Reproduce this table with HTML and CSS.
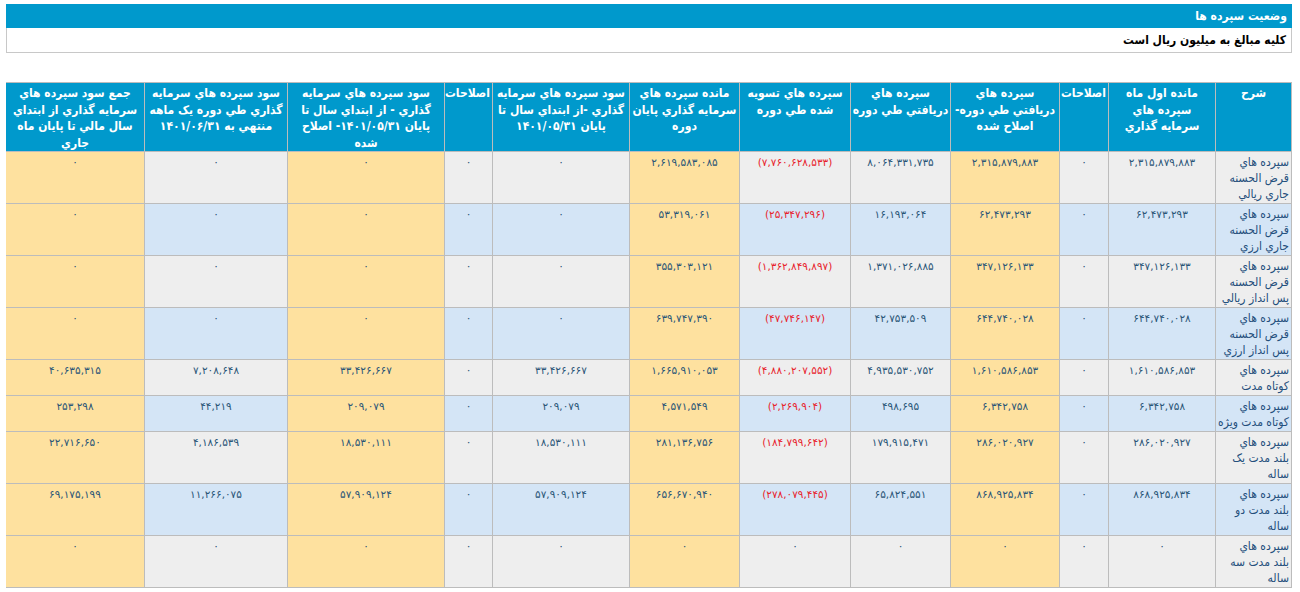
FILE: index.html
```html
<!DOCTYPE html>
<html lang="fa" dir="rtl">
<head>
<meta charset="utf-8">
<title>وضعيت سپرده ها</title>
<link rel="stylesheet" href="styles.css">
</head>
<body>
<div class="panel">
  <div class="panel-title">وضعيت سپرده ها</div>
  <div class="panel-note">کليه مبالغ به ميليون ريال است</div>
</div>
<table class="grid">
  <colgroup>
    <col class="c1"><col class="c2"><col class="c3"><col class="c4"><col class="c5"><col class="c6">
    <col class="c7"><col class="c8"><col class="c9"><col class="c10"><col class="c11"><col class="c12">
  </colgroup>
  <thead>
    <tr>
      <th>شرح</th>
      <th class="loose">مانده اول ماه سپرده هاي سرمايه گذاري</th>
      <th>اصلاحات</th>
      <th>سپرده هاي دريافتي طي دوره- اصلاح شده</th>
      <th class="tight">سپرده هاي دريافتي طي دوره</th>
      <th>سپرده هاي تسويه شده طي دوره</th>
      <th>مانده سپرده هاي سرمايه گذاري پايان دوره</th>
      <th>سود سپرده هاي سرمايه گذاري -از ابتداي سال تا پايان ۱۴۰۱/۰۵/۳۱</th>
      <th>اصلاحات</th>
      <th>سود سپرده هاي سرمايه گذاري - از ابتداي سال تا پايان ۱۴۰۱/۰۵/۳۱- اصلاح شده</th>
      <th>سود سپرده هاي سرمايه گذاري طي دوره يک ماهه منتهي به ۱۴۰۱/۰۶/۳۱</th>
      <th>جمع سود سپرده هاي سرمايه گذاري از ابتداي سال مالي تا پايان ماه جاري</th>
    </tr>
  </thead>
  <tbody>
    <tr class="odd">
      <td class="desc"><span class="lead">سپرده هاي</span> قرض الحسنه جاري ريالي</td>
      <td>۲,۳۱۵,۸۷۹,۸۸۳</td><td>۰</td><td class="hl">۲,۳۱۵,۸۷۹,۸۸۳</td><td>۸,۰۶۴,۳۳۱,۷۳۵</td>
      <td class="neg">(۷,۷۶۰,۶۲۸,۵۳۳)</td><td class="hl">۲,۶۱۹,۵۸۳,۰۸۵</td><td>۰</td><td>۰</td>
      <td class="hl">۰</td><td>۰</td><td class="hl">۰</td>
    </tr>
    <tr class="even">
      <td class="desc"><span class="lead">سپرده هاي</span> قرض الحسنه جاري ارزي</td>
      <td>۶۲,۴۷۳,۲۹۳</td><td>۰</td><td class="hl">۶۲,۴۷۳,۲۹۳</td><td>۱۶,۱۹۳,۰۶۴</td>
      <td class="neg">(۲۵,۳۴۷,۲۹۶)</td><td class="hl">۵۳,۳۱۹,۰۶۱</td><td>۰</td><td>۰</td>
      <td class="hl">۰</td><td>۰</td><td class="hl">۰</td>
    </tr>
    <tr class="odd">
      <td class="desc"><span class="lead">سپرده هاي</span> قرض الحسنه پس انداز ريالي</td>
      <td>۳۴۷,۱۲۶,۱۳۳</td><td>۰</td><td class="hl">۳۴۷,۱۲۶,۱۳۳</td><td>۱,۳۷۱,۰۲۶,۸۸۵</td>
      <td class="neg">(۱,۳۶۲,۸۴۹,۸۹۷)</td><td class="hl">۳۵۵,۳۰۳,۱۲۱</td><td>۰</td><td>۰</td>
      <td class="hl">۰</td><td>۰</td><td class="hl">۰</td>
    </tr>
    <tr class="even">
      <td class="desc"><span class="lead">سپرده هاي</span> قرض الحسنه پس انداز ارزي</td>
      <td>۶۴۴,۷۴۰,۰۲۸</td><td>۰</td><td class="hl">۶۴۴,۷۴۰,۰۲۸</td><td>۴۲,۷۵۳,۵۰۹</td>
      <td class="neg">(۴۷,۷۴۶,۱۴۷)</td><td class="hl">۶۳۹,۷۴۷,۳۹۰</td><td>۰</td><td>۰</td>
      <td class="hl">۰</td><td>۰</td><td class="hl">۰</td>
    </tr>
    <tr class="odd">
      <td class="desc"><span class="lead">سپرده هاي</span> کوتاه مدت</td>
      <td>۱,۶۱۰,۵۸۶,۸۵۳</td><td>۰</td><td class="hl">۱,۶۱۰,۵۸۶,۸۵۳</td><td>۴,۹۳۵,۵۳۰,۷۵۲</td>
      <td class="neg">(۴,۸۸۰,۲۰۷,۵۵۲)</td><td class="hl">۱,۶۶۵,۹۱۰,۰۵۳</td><td>۳۳,۴۲۶,۶۶۷</td><td>۰</td>
      <td class="hl">۳۳,۴۲۶,۶۶۷</td><td>۷,۲۰۸,۶۴۸</td><td class="hl">۴۰,۶۳۵,۳۱۵</td>
    </tr>
    <tr class="even">
      <td class="desc"><span class="lead">سپرده هاي</span> کوتاه مدت ويژه</td>
      <td>۶,۳۴۲,۷۵۸</td><td>۰</td><td class="hl">۶,۳۴۲,۷۵۸</td><td>۴۹۸,۶۹۵</td>
      <td class="neg">(۲,۲۶۹,۹۰۴)</td><td class="hl">۴,۵۷۱,۵۴۹</td><td>۲۰۹,۰۷۹</td><td>۰</td>
      <td class="hl">۲۰۹,۰۷۹</td><td>۴۴,۲۱۹</td><td class="hl">۲۵۳,۲۹۸</td>
    </tr>
    <tr class="odd">
      <td class="desc"><span class="lead">سپرده هاي</span> بلند مدت يک ساله</td>
      <td>۲۸۶,۰۲۰,۹۲۷</td><td>۰</td><td class="hl">۲۸۶,۰۲۰,۹۲۷</td><td>۱۷۹,۹۱۵,۴۷۱</td>
      <td class="neg">(۱۸۴,۷۹۹,۶۴۲)</td><td class="hl">۲۸۱,۱۳۶,۷۵۶</td><td>۱۸,۵۳۰,۱۱۱</td><td>۰</td>
      <td class="hl">۱۸,۵۳۰,۱۱۱</td><td>۴,۱۸۶,۵۳۹</td><td class="hl">۲۲,۷۱۶,۶۵۰</td>
    </tr>
    <tr class="even">
      <td class="desc"><span class="lead">سپرده هاي</span> بلند مدت دو ساله</td>
      <td>۸۶۸,۹۲۵,۸۳۴</td><td>۰</td><td class="hl">۸۶۸,۹۲۵,۸۳۴</td><td>۶۵,۸۲۴,۵۵۱</td>
      <td class="neg">(۲۷۸,۰۷۹,۴۴۵)</td><td class="hl">۶۵۶,۶۷۰,۹۴۰</td><td>۵۷,۹۰۹,۱۲۴</td><td>۰</td>
      <td class="hl">۵۷,۹۰۹,۱۲۴</td><td>۱۱,۲۶۶,۰۷۵</td><td class="hl">۶۹,۱۷۵,۱۹۹</td>
    </tr>
    <tr class="odd">
      <td class="desc"><span class="lead">سپرده هاي</span> بلند مدت سه ساله</td>
      <td>۰</td><td>۰</td><td class="hl">۰</td><td>۰</td>
      <td>۰</td><td class="hl">۰</td><td>۰</td><td>۰</td>
      <td class="hl">۰</td><td>۰</td><td class="hl">۰</td>
    </tr>
  </tbody>
</table>
</body>
</html>
```

FILE: styles.css
```css
html, body {
  background: #ffffff;
}
body {
  margin: 4px 8px 0 6px;
  font-family: "DejaVu Sans Condensed", "DejaVu Sans", sans-serif;
  font-size: 12px;
}
.panel {
  display: flex;
  flex-direction: column;
}
.panel-title {
  height: 24px;
  line-height: 24px;
  background: #0099cc;
  color: #ffffff;
  font-weight: bold;
  font-size: 12px;
  padding: 0 5px;
}
.panel-note {
  height: 24px;
  line-height: 24px;
  border: 1px solid #c8c8c8;
  border-top: none;
  color: #000000;
  font-weight: bold;
  font-size: 12px;
  padding: 0 5px;
}
.grid {
  margin-top: 29px;
  width: 1286px;
  table-layout: fixed;
  border-collapse: collapse;
}
.c1 { width: 76px; }
.c2 { width: 107px; }
.c3 { width: 49px; }
.c4 { width: 109px; }
.c5 { width: 100px; }
.c6 { width: 111px; }
.c7 { width: 110px; }
.c8 { width: 137px; }
.c9 { width: 48px; }
.c10 { width: 157px; }
.c11 { width: 143px; }
.c12 { width: 139px; }
.grid th {
  background: #0099cc;
  color: #ffffff;
  font-weight: bold;
  font-size: 12px;
  line-height: 16.5px;
  padding: 2px 2px 0;
  vertical-align: top;
  text-align: center;
  border: 1px solid #bcbcbc;
  height: 66px;
  box-sizing: border-box;
}
.grid th.tight {
  padding: 2px 0 0;
}
.grid th.loose {
  padding: 2px 10px 0;
}
.grid td {
  font-family: "DejaVu Sans", sans-serif;
  color: #2a5577;
  font-size: 10.5px;
  line-height: 16px;
  padding: 2px 3px 1px;
  vertical-align: top;
  text-align: center;
  border: 1px solid #bcbcbc;
}
.grid tr.odd td { background: #eeeeee; }
.grid tr.even td { background: #d4e5f6; }
.grid tr td.hl { background: #fee19f; }
.grid td.desc {
  font-family: "DejaVu Sans Condensed", "DejaVu Sans", sans-serif;
  text-align: right;
  color: #244f7c;
  font-size: 12px;
  padding: 2px 2px 1px;
}
.lead {
  display: block;
}
.grid td.neg { color: #e8232c; }
```
